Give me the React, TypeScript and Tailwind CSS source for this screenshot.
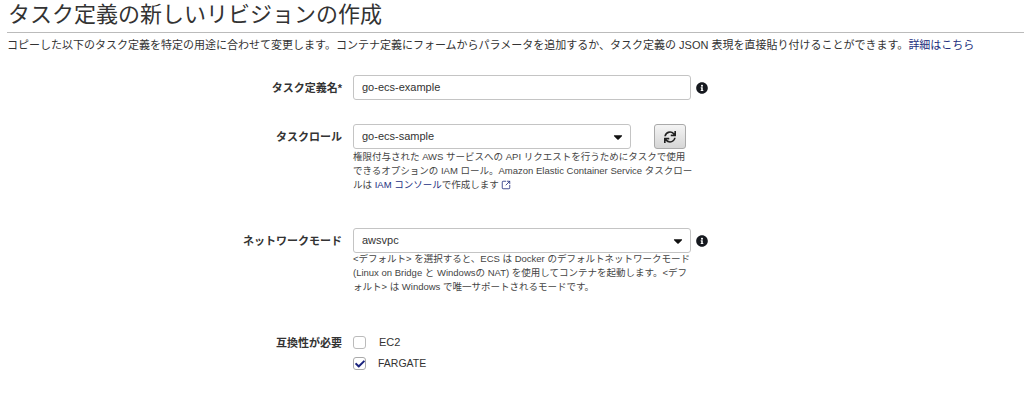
import { FaInfoCircle, FaSync, FaCheck, FaCaretDown } from "react-icons/fa";
import { SquareArrowOutUpRight } from "lucide-react";

const font = "font-['Liberation_Sans','Noto_Sans_CJK_JP',sans-serif]";

function Info() {
  return <FaInfoCircle className="w-[12px] h-[12px] text-[#16191f]" />;
}

function Field({ value }: { value: string }) {
  return (
    <div className="w-[338px] h-[25px] shrink-0 flex items-center pl-2 pr-2 rounded-[3px] border border-[#c4c4c4] bg-white text-[11px] text-[#333]">
      {value}
    </div>
  );
}

function Select({ value, width }: { value: string; width: string }) {
  return (
    <div className={`${width} h-[25px] shrink-0 flex items-center justify-between pl-2 pr-[5px] rounded-[3px] border border-[#c4c4c4] bg-white text-[11px] text-[#333]`}>
      <span>{value}</span>
      <FaCaretDown className="w-[14px] h-[14px] text-[#111]" />
    </div>
  );
}

function Label({ children, leading = "leading-[26px]" }: { children: React.ReactNode; leading?: string }) {
  return (
    <div className={`w-[342px] shrink-0 text-right text-[11px] font-bold text-[#333] ${leading}`}>
      {children}
    </div>
  );
}

function Help({ children, top = "mt-[1px]" }: { children: React.ReactNode; top?: string }) {
  return <div className={`w-[340px] ${top} text-[9.5px] leading-[14px] text-[#444]`}>{children}</div>;
}

export default function App() {
  return (
    <div className={`w-[1024px] h-[400px] overflow-hidden bg-white ${font}`}>
      <h1 className="pl-[8px] h-[32px] text-[22px] leading-[30px] text-[#333] tracking-normal">
        タスク定義の新しいリビジョンの作成
      </h1>
      <div className="ml-[7px] border-t border-[#bbb]" />
      <p className="pl-[7px] pt-[5px] h-[42px] text-[11px] leading-[14px] text-[#333] whitespace-nowrap">
        コピーした以下のタスク定義を特定の用途に合わせて変更します。コンテナ定義にフォームからパラメータを追加するか、タスク定義の JSON 表現を直接貼り付けることができます。
        <span className="text-[#232f7e]">詳細はこちら</span>
      </p>

      <div className="flex items-start h-[49px]">
        <Label>タスク定義名*</Label>
        <div className="ml-[11px] flex items-center gap-[5px]">
          <Field value="go-ecs-example" />
          <Info />
        </div>
      </div>

      <div className="flex items-start h-[104px]">
        <Label>タスクロール</Label>
        <div className="ml-[11px]">
          <div className="flex items-center gap-[23px]">
            <Select value="go-ecs-sample" width="w-[278px]" />
            <div className="w-[32px] h-[25px] flex items-center justify-center rounded-[3px] border border-[#aaa] bg-gradient-to-b from-[#f4f4f4] to-[#d6d6d6]">
              <FaSync className="w-[12px] h-[12px] text-[#222]" />
            </div>
          </div>
          <Help>
            権限付与された AWS サービスへの API リクエストを行うためにタスクで使用できるオプションの IAM ロール。Amazon Elastic Container Service タスクロールは{" "}
            <span className="text-[#232f7e]">IAM コンソール</span>で作成します{" "}
            <SquareArrowOutUpRight className="inline w-[10px] h-[10px] text-[#232f7e]" />
          </Help>
        </div>
      </div>

      <div className="flex items-start h-[108px]">
        <Label>ネットワークモード</Label>
        <div className="ml-[11px]">
          <div className="flex items-center gap-[5px]">
            <Select value="awsvpc" width="w-[338px]" />
            <Info />
          </div>
          <Help top="-mt-[1px]">
            &lt;デフォルト&gt; を選択すると、ECS は Docker のデフォルトネットワークモード (Linux on Bridge と Windowsの NAT) を使用してコンテナを起動します。&lt;デフォルト&gt; は Windows で唯一サポートされるモードです。
          </Help>
        </div>
      </div>

      <div className="flex items-start">
        <Label leading="leading-[14px]">互換性が必要</Label>
        <div className="ml-[11px] flex flex-col gap-[8px] text-[11px] text-[#333]">
          <div className="flex items-center h-[13px] gap-[13px]">
            <span className="w-[13px] h-[13px] rounded-[3px] border border-[#bbb] bg-white" />
            <span>EC2</span>
          </div>
          <div className="flex items-center h-[13px] gap-[12px]">
            <span className="w-[13px] h-[13px] rounded-[3px] border border-[#aaa] bg-white flex items-center justify-center">
              <FaCheck className="w-[10px] h-[10px] text-[#1a237e]" />
            </span>
            <span className="text-[10.5px]">FARGATE</span>
          </div>
        </div>
      </div>
    </div>
  );
}
